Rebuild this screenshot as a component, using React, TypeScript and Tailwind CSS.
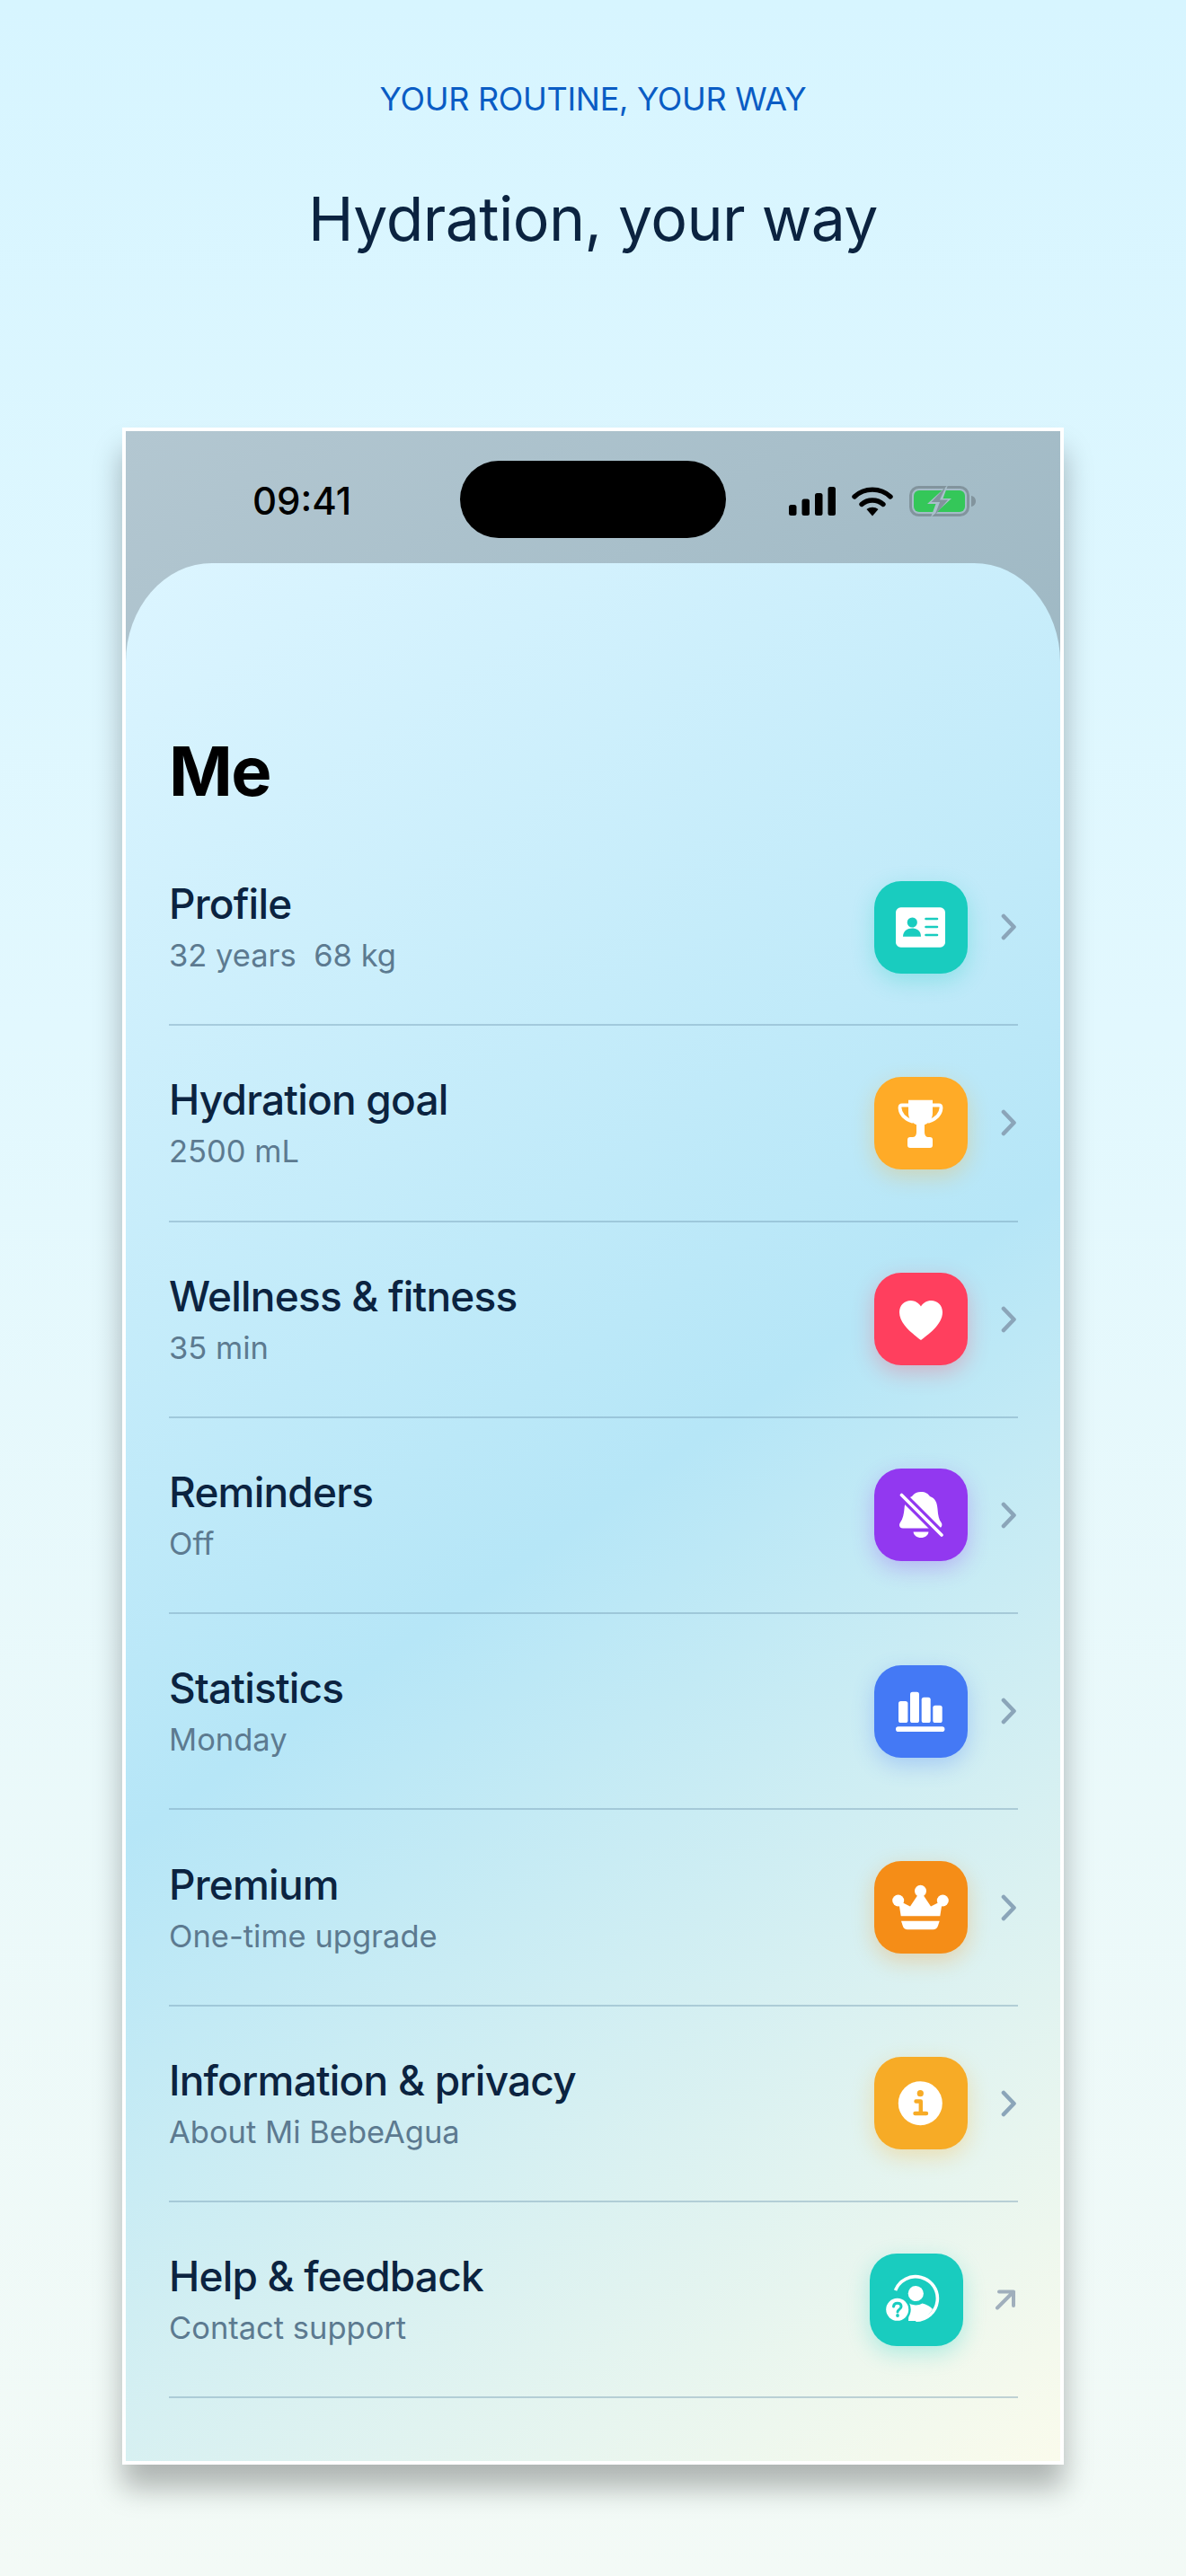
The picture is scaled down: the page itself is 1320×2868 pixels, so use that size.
import React from "react";

const Chevron = () => (
  <svg width="18" height="40" viewBox="0 0 18 40" fill="none" className="block">
    <path d="M3 8 L14.5 20 L3 32" stroke="#8ba5b9" strokeWidth="4.6" strokeLinecap="round" strokeLinejoin="round" />
  </svg>
);

const ArrowOut = () => (
  <svg width="24" height="24" viewBox="0 0 24 24" fill="none" className="block">
    <path d="M3 21.5 L21 3.5 M5 3.5 H21 V19" stroke="#a0afbc" strokeWidth="4" strokeLinecap="round" strokeLinejoin="round" />
  </svg>
);

const ProfileIcon = ({ c }: { c: string }) => (
  <>
    <rect x="24" y="29.3" width="55" height="44.4" rx="5.5" fill="#fff" />
    <circle cx="42.3" cy="46" r="5.6" fill={c} />
    <path d="M32 61.8 C32 55.5 37 52.5 42.3 52.5 C47.6 52.5 52 55.5 52 61.8 Z" fill={c} />
    <path d="M57.5 42 H70 M57.5 51 H70 M57.5 60 H70" stroke={c} strokeWidth="2.6" strokeLinecap="round" />
  </>
);

const TrophyIcon = () => (
  <>
    <path d="M38 25.7 H65 V40 C65 48 59 54 51.5 54 C44 54 38 48 38 40 Z" fill="#fff" />
    <path d="M39 31.5 H31 C29 31.5 28.5 32.5 28.5 34.5 C29 41.5 34 46.5 42 49.5 M64 31.5 H72 C74 31.5 74.5 32.5 74.5 34.5 C74 41.5 69 46.5 61 49.5" stroke="#fff" strokeWidth="3.8" fill="none" strokeLinecap="round" />
    <path d="M47 52 H56 V62 C56 65 58 67 60 67 H43 C45 67 47 65 47 62 Z" fill="#fff" />
    <rect x="37" y="67" width="28" height="12" rx="3" fill="#fff" />
  </>
);

const HeartIcon = () => (
  <path d="M52 75 C45 69.5 28 58 28 44 C28 36 34 31 40.5 31 C45.5 31 49.5 33.5 52 37.5 C54.5 33.5 58.5 31 63.5 31 C70 31 76 36 76 44 C76 58 59 69.5 52 75 Z" fill="#fff" />
);

const BellOffIcon = ({ c }: { c: string }) => (
  <>
    <path d="M52 26 C57 26 60 28 62 31 C68 33 70 38 70.5 45 C71 52 72 57 74.5 60 C76.5 63 75 66.5 71 66.5 H32 C28 66.5 27 63 29 60 C32 56 33 50 33.5 45 C34 38 36 33 42 31 C44 28 47 26 52 26 Z" fill="#fff" />
    <path d="M43.5 70.5 H60.5 C60 74.5 56.5 77 52 77 C47.5 77 44 74.5 43.5 70.5 Z" fill="#fff" />
    <path d="M30 29 L75 74" stroke={c} strokeWidth="10" strokeLinecap="round" />
    <path d="M30.5 29.5 L75 74" stroke="#fff" strokeWidth="3.6" strokeLinecap="round" />
  </>
);

const ChartIcon = () => (
  <>
    <rect x="27" y="40" width="10.4" height="24" rx="2.6" fill="#fff" />
    <rect x="40" y="29.7" width="10" height="34.3" rx="2.6" fill="#fff" />
    <rect x="52.7" y="35.7" width="10" height="28.3" rx="2.6" fill="#fff" />
    <rect x="65.3" y="44.7" width="10.4" height="19.3" rx="2.6" fill="#fff" />
    <rect x="24" y="68.3" width="54.4" height="5.7" rx="2.8" fill="#fff" />
  </>
);

const CrownIcon = () => (
  <>
    <circle cx="26.7" cy="44" r="6.5" fill="#fff" />
    <circle cx="51.5" cy="33.3" r="6.5" fill="#fff" />
    <circle cx="76.3" cy="44" r="6.5" fill="#fff" />
    <path d="M27 44 L40 50.6 L51.5 33.3 L63 50.6 L76 44 L73.3 61.3 H29.7 Z" fill="#fff" />
    <path d="M30 66.7 H72.7 L71 72 C70 75 68 76.3 65.5 76.3 H37 C34.5 76.3 32.5 75 31.7 72 Z" fill="#fff" />
  </>
);

const InfoIcon = ({ c }: { c: string }) => (
  <>
    <circle cx="51.3" cy="51.7" r="24.5" fill="#fff" />
    <circle cx="51.3" cy="40.7" r="3.6" fill={c} />
    <path d="M46.5 49.5 H51.8 V62.5 M45.5 63 H58" stroke={c} strokeWidth="4.4" fill="none" strokeLinecap="round" strokeLinejoin="round" />
  </>
);

const HelpIcon = ({ c }: { c: string }) => (
  <>
    <path d="M28.5 41 A24.3 24.3 0 1 1 51.3 74.3" stroke="#fff" strokeWidth="3.6" fill="none" strokeLinecap="butt" />
    <circle cx="51.3" cy="44.5" r="8.6" fill="#fff" />
    <path d="M44 55.5 C48 58 54.5 58 58.5 55.5 C63 56.5 67.5 59 70 62 C65.5 69 59 73.5 51.3 75 H43 Z" fill="#fff" />
    <circle cx="30.7" cy="62.3" r="15" fill={c} />
    <circle cx="30.7" cy="62.3" r="12.5" fill="#fff" />
    <path d="M26.5 59 C26.8 56.5 28.6 55.3 30.8 55.3 C33.3 55.3 35 56.8 35 59 C35 62.2 31 62 31 65" stroke={c} strokeWidth="3" fill="none" strokeLinecap="round" />
    <circle cx="31" cy="69" r="1.9" fill={c} />
  </>
);

type Row = {
  title: string;
  sub: string;
  tile: string;
  shadow: string;
  icon: React.ReactNode;
  external?: boolean;
};

const rows: Row[] = [
  { title: "Profile", sub: "32 years  68 kg", tile: "bg-[#19ccbf]", shadow: "shadow-[0_8px_24px_rgba(25,204,191,0.3)]", icon: <ProfileIcon c="#19ccbf" /> },
  { title: "Hydration goal", sub: "2500 mL", tile: "bg-[#ffab27]", shadow: "shadow-[0_8px_24px_rgba(255,171,39,0.3)]", icon: <TrophyIcon /> },
  { title: "Wellness & fitness", sub: "35 min", tile: "bg-[#ff3f5e]", shadow: "shadow-[0_8px_24px_rgba(255,63,94,0.3)]", icon: <HeartIcon /> },
  { title: "Reminders", sub: "Off", tile: "bg-[#9238f0]", shadow: "shadow-[0_8px_24px_rgba(146,56,240,0.3)]", icon: <BellOffIcon c="#9238f0" /> },
  { title: "Statistics", sub: "Monday", tile: "bg-[#4479f5]", shadow: "shadow-[0_8px_24px_rgba(68,121,245,0.3)]", icon: <ChartIcon /> },
  { title: "Premium", sub: "One-time upgrade", tile: "bg-[#f58d17]", shadow: "shadow-[0_8px_24px_rgba(245,141,23,0.3)]", icon: <CrownIcon /> },
  { title: "Information & privacy", sub: "About Mi BebeAgua", tile: "bg-[#f7ab26]", shadow: "shadow-[0_8px_24px_rgba(247,171,38,0.3)]", icon: <InfoIcon c="#f7ab26" /> },
  { title: "Help & feedback", sub: "Contact support", tile: "bg-[#19ccbf]", shadow: "shadow-[0_8px_24px_rgba(25,204,191,0.3)]", icon: <HelpIcon c="#19ccbf" />, external: true },
];

const StatusIcons = () => (
  <div className="flex items-center">
    <svg width="52" height="32" viewBox="0 0 52 32" className="block">
      <rect x="0" y="20" width="8.5" height="12" rx="2.5" fill="#000" />
      <rect x="14.5" y="13.5" width="8.5" height="18.5" rx="2.5" fill="#000" />
      <rect x="29" y="7" width="8.5" height="25" rx="2.5" fill="#000" />
      <rect x="43.5" y="0" width="8.5" height="32" rx="2.5" fill="#000" />
    </svg>
    <svg width="46" height="34" viewBox="0 0 46 34" fill="none" className="block ml-[18px]">
      <path d="M3 12 C14 1.5 32 1.5 43 12" stroke="#000" strokeWidth="5.4" strokeLinecap="round" />
      <path d="M11 20.5 C17.5 14.5 28.5 14.5 35 20.5" stroke="#000" strokeWidth="5.4" strokeLinecap="round" />
      <path d="M16.5 26 C20.5 23 25.5 23 29.5 26 L23 33.5 Z" fill="#000" />
    </svg>
    <svg width="74" height="36" viewBox="0 -1 74 36" fill="none" className="block ml-[18px]">
      <rect x="1.5" y="1.5" width="64" height="31" rx="9" stroke="#82949d" strokeWidth="3" />
      <rect x="5" y="5" width="57" height="24" rx="6" fill="#34c759" />
      <path d="M69 11 C72 11.5 74 14 74 17 C74 20 72 22.5 69 23 Z" fill="#82949d" />
      <path d="M43 -1 L20 20 H29.5 L24 35 L47 14 H37.5 Z" fill="#a9c0cb" />
      <path d="M40.5 1 L24.5 18 H34 L28.5 32.5 L43 15.5 H34 Z" fill="#82949d" />
    </svg>
  </div>
);

export default function App() {
  return (
    <div className="w-[1320px] h-[2868px] overflow-hidden flex flex-col items-center font-[family-name:Inter,sans-serif] bg-[linear-gradient(180deg,#d7f5ff_0%,#e2f8fe_40%,#f3faf6_100%)]">
      <p className="mt-[88px] text-[36px] leading-[44px] text-[#0a5cc4] tracking-[-0.3px]">YOUR ROUTINE, YOUR WAY</p>
      <h1 className="mt-[66px] text-[68px] leading-[90px] font-normal text-[#0b2340] tracking-[-0.6px]">Hydration, your way</h1>

      <div className="mt-[188px] w-[1048px] h-[2268px] shrink-0 border-4 border-white overflow-hidden flex flex-col bg-[linear-gradient(145deg,#b3c7d1_0px,#9ab5c1_1000px)] shadow-[0_26px_30px_rgba(0,0,0,0.28)]">
        <div className="h-[147px] shrink-0 flex items-start relative">
          <div className="absolute left-[372px] top-[33px] w-[296px] h-[86px] rounded-[43px] bg-black" />
          <span className="absolute left-[141px] top-[53px] text-[42px] leading-[50px] font-medium text-black">09:41</span>
          <div className="absolute left-[738px] top-[60px]">
            <StatusIcons />
          </div>
        </div>
        <div className="flex-1 rounded-tl-[96px_110px] rounded-tr-[96px_110px] px-[48px] pr-[47px] bg-[linear-gradient(145deg,#dcf5ff_0%,#b6e6f7_50%,#fafbec_100%)]">
          <h2 className="pt-[173px] h-[297px] text-[76px] leading-[117px] font-bold text-black tracking-[-1.5px]">Me</h2>
          {rows.map((r) => (
            <div key={r.title} className="h-[218.29px] border-b-2 border-[#6f97b0]/40 flex items-center">
              <div className="flex-1 min-w-0">
                <div className="text-[46px] leading-[58px] font-medium text-[#0b2340] tracking-[-0.8px]">{r.title}</div>
                <div className="mt-[6px] text-[34.5px] leading-[46px] text-[#5c7a90] whitespace-pre">{r.sub}</div>
              </div>
              <div className={`w-[104px] h-[103px] rounded-[30px] ${r.tile} ${r.shadow}`}>
                <svg width="104" height="103" viewBox="0 0 104 103" className="block">
                  {r.icon}
                </svg>
              </div>
              {r.external ? (
                <div className="ml-[35px] mr-[2px] w-[24px]">
                  <ArrowOut />
                </div>
              ) : (
                <div className="ml-[37px] mr-[1px] w-[18px]">
                  <Chevron />
                </div>
              )}
            </div>
          ))}
        </div>
      </div>
    </div>
  );
}
